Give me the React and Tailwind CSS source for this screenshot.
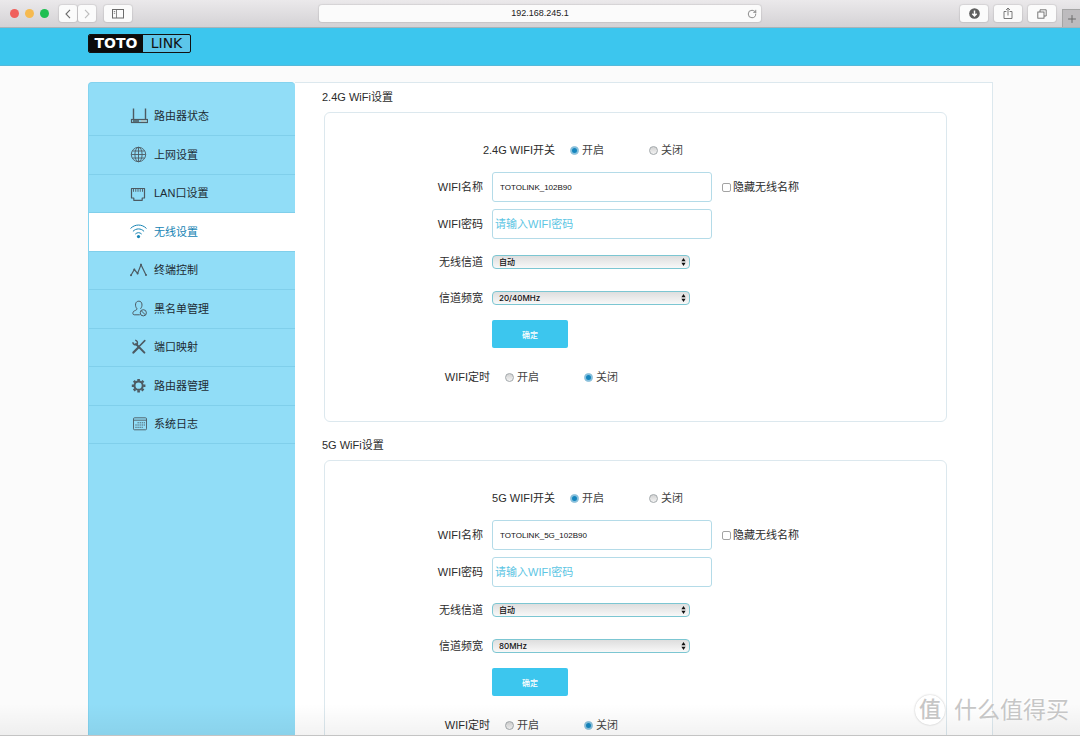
import React, { useState } from "react";
import { Plus, RotateCw } from "lucide-react";

const RouterIcon = () => (
  <>
    <path d="M3.5 0.5V11M15.5 0.5V11" strokeWidth="1.4" />
    <rect x="1.5" y="11.5" width="16" height="3" strokeWidth="1.2" />
    <path d="M3 13h6" strokeWidth="1.6" />
    <path d="M11 13h5" strokeWidth="1" stroke="#c3b5a6" />
  </>
);

const GlobeIcon = () => (
  <>
    <circle cx="8.5" cy="8.5" r="7.2" />
    <ellipse cx="8.5" cy="8.5" rx="3.6" ry="7.2" />
    <path d="M8.5 1.3v14.4M1.3 8.5h14.4M2.3 5h12.4M2.3 12h12.4" />
  </>
);

const LanIcon = () => (
  <>
    <path
      d="M1.5 3.5h13v9.5h-2.3v2.3H3.8V13H1.5z"
      strokeWidth="1.2"
      strokeLinejoin="round"
    />
    <path
      d="M3.5 4v2.8M5.75 4v2.8M8 4v2.8M10.25 4v2.8M12.5 4v2.8"
      strokeWidth="0.9"
    />
  </>
);

const WifiIcon = () => (
  <>
    <path
      d="M0.8 5.2C5 0.9 12 0.9 16.2 5.2M3.2 8.1c3-3 7.6-3 10.6 0M5.6 10.8c1.7-1.6 4.1-1.6 5.8 0"
      strokeWidth="1"
      strokeLinecap="round"
    />
    <circle cx="8.5" cy="13.6" r="1.6" fill="currentColor" stroke="none" />
  </>
);

const ActivityIcon = () => (
  <>
    <path d="M1 14.2L4.3 8.5 7.6 12.4 11 3.8 16 14" strokeWidth="1.2" />
    <g fill="currentColor" stroke="none">
      <circle cx="1" cy="14.2" r="1" />
      <circle cx="4.3" cy="8.5" r="1" />
      <circle cx="7.6" cy="12.4" r="1" />
      <circle cx="11" cy="3.8" r="1" />
      <circle cx="16" cy="14" r="1" />
    </g>
  </>
);

const BlacklistIcon = () => (
  <>
    <path
      d="M9.8 14.8H4.2C2.5 14.8 2.6 12.4 3.6 11.4 4.7 10.4 7 10.2 7 8.8 5.8 7.4 5.3 5.6 5.6 3.9 6 2 7.2 1.2 8.8 1.2s2.9 0.9 3.1 2.7c0.3 1.8-0.2 3.5-1.4 4.9"
      strokeWidth="1"
    />
    <circle cx="13.3" cy="12.8" r="3.1" strokeWidth="1" />
    <path d="M11.2 10.7l4.2 4.2" strokeWidth="1" />
  </>
);

const ToolsIcon = () => (
  <>
    <path d="M6 6l8.4 8.6" strokeWidth="2" strokeLinecap="round" />
    <path
      d="M2.9 4.2a2.6 2.6 0 0 0 4 2.2A2.6 2.6 0 0 0 5.2 2.2"
      strokeWidth="1.5"
    />
    <path d="M14.8 2.6l-5 5.2" strokeWidth="1.6" strokeLinecap="round" />
    <path d="M8.6 9.2l-5.2 5.4" strokeWidth="2.2" strokeLinecap="round" />
  </>
);

const GearIcon = () => (
  <>
    <circle cx="8.6" cy="8.7" r="4.1" strokeWidth="2" />
    <path
      d="M8.6 1.9v2.2M8.6 13.3v2.2M1.8 8.7H4M13.2 8.7h2.2M3.8 3.9l1.5 1.5M11.9 12l1.5 1.5M13.4 3.9l-1.5 1.5M5.3 12l-1.5 1.5"
      strokeWidth="2.6"
    />
  </>
);

const LogIcon = () => (
  <>
    <rect x="3.5" y="2.8" width="13" height="12" rx="1" />
    <path d="M3.5 5.2h13" />
    <path d="M7.5 7.8h7.5M5.3 10h9.7M5.3 12.3h7.5" strokeDasharray="1.4 0.7" />
  </>
);

const menuItems = [
  { label: "路由器状态", icon: RouterIcon },
  { label: "上网设置", icon: GlobeIcon },
  { label: "LAN口设置", icon: LanIcon },
  { label: "无线设置", icon: WifiIcon },
  { label: "终端控制", icon: ActivityIcon },
  { label: "黑名单管理", icon: BlacklistIcon },
  { label: "端口映射", icon: ToolsIcon },
  { label: "路由器管理", icon: GearIcon },
  { label: "系统日志", icon: LogIcon },
];

const bands = [
  {
    id: "wifi24",
    title: "2.4G WiFi设置",
    switchLabel: "2.4G WIFI开关",
    ssid: "TOTOLINK_102B90",
    bandwidths: ["20/40MHz", "20MHz", "40MHz"],
  },
  {
    id: "wifi5",
    title: "5G WiFi设置",
    switchLabel: "5G WIFI开关",
    ssid: "TOTOLINK_5G_102B90",
    bandwidths: ["80MHz", "40MHz", "20MHz"],
  },
];

const ToolbarButton = ({ label, className = "w-7", children }) => (
  <button
    type="button"
    aria-label={label}
    className={`flex h-[17px] items-center justify-center rounded-[3px] bg-[#fbfbfb] text-[#6b6b6b] shadow-[0_0_1px_1px_rgba(0,0,0,0.08)] ${className}`}
  >
    {children}
  </button>
);

const BrowserBar = () => (
  <div className="grid h-7 shrink-0 grid-cols-[1fr_41%_1fr] items-center border-b border-[#a9b3b8] bg-linear-to-b from-[#ebe9eb] to-[#d4d2d5]">
    <div className="flex items-center pl-[10px]">
      <div className="flex gap-[6px]">
        <span className="size-[9px] rounded-full bg-[#f0605c]" />
        <span className="size-[9px] rounded-full bg-[#f6ba50]" />
        <span className="size-[9px] rounded-full bg-[#1fbf52]" />
      </div>
      <div className="ml-[10px] flex gap-px">
        <ToolbarButton label="后退" className="w-[18px]">
          <svg viewBox="0 0 6 10" className="h-[10px] w-[6px]" fill="none" stroke="currentColor" strokeWidth="1.1">
            <path d="M5 0.8L1 5l4 4.2" />
          </svg>
        </ToolbarButton>
        <ToolbarButton label="前进" className="w-[18px]">
          <svg viewBox="0 0 6 10" className="h-[10px] w-[6px]" fill="none" stroke="#bdbdbd" strokeWidth="1.1">
            <path d="M1 0.8L5 5 1 9.2" />
          </svg>
        </ToolbarButton>
      </div>
      <div className="ml-2 flex">
        <ToolbarButton label="边栏">
          <svg viewBox="0 0 12 10" className="h-[10px] w-3" fill="none" stroke="currentColor">
            <rect x="0.5" y="0.5" width="11" height="8.5" />
            <path d="M4.5 0.5v8.5M1.8 2.5h1.4M1.8 4.3h1.4" strokeWidth="0.8" />
          </svg>
        </ToolbarButton>
      </div>
    </div>

    <div className="flex h-[17px] items-center rounded-[3px] bg-[#fbfbfb] px-1 shadow-[0_0_1px_1px_rgba(0,0,0,0.08)]">
      <input
        aria-label="地址"
        defaultValue="192.168.245.1"
        className="min-w-0 flex-1 bg-transparent pl-[10px] text-center text-[9px] text-[#222] outline-none"
      />
      <button type="button" aria-label="重新载入" className="text-[#777]">
        <RotateCw className="size-[10px]" strokeWidth={2} />
      </button>
    </div>

    <div className="flex h-full items-center justify-end gap-[6px]">
      <ToolbarButton label="下载">
        <svg viewBox="0 0 12 12" className="size-[11px]">
          <circle cx="6" cy="6" r="5.8" fill="#5f5f5f" />
          <path
            d="M6 2.6v5.6M3.6 6.2L6 8.6l2.4-2.4"
            fill="none"
            stroke="#fff"
            strokeWidth="1.6"
          />
        </svg>
      </ToolbarButton>
      <ToolbarButton label="共享">
        <svg viewBox="0 0 10 13" className="h-[13px] w-[10px]" fill="none" stroke="currentColor" strokeWidth="0.9">
          <path d="M3.4 4.5H1v7h8v-7H6.6M5 8.5V1.2M3 3L5 1l2 2" />
        </svg>
      </ToolbarButton>
      <ToolbarButton label="标签页">
        <svg viewBox="0 0 10 10" className="size-[10px]" fill="none" stroke="currentColor" strokeWidth="0.9">
          <rect x="0.8" y="3" width="6.2" height="6.2" />
          <path d="M3 3V0.8h6.2V7H7" />
        </svg>
      </ToolbarButton>
      <button
        type="button"
        aria-label="新标签页"
        className="flex h-[18px] w-[18px] items-center justify-center self-end border-t border-l border-[#a5a5a5] bg-[#bdbbbe] text-[#6b6b6b]"
      >
        <Plus className="size-3" strokeWidth={2} />
      </button>
    </div>
  </div>
);

const Header = () => (
  <header className="h-[38px] shrink-0 border-b border-[#54b9da] bg-[#3cc6ee] px-[88px] pt-[6px]">
    <a
      href="#home"
      className="flex h-[19px] w-[103px] overflow-hidden rounded-[2px] border border-[#111] bg-[#5cc6ea] font-['DejaVu_Sans',sans-serif] text-[14px] leading-[17px]"
    >
      <span className="flex-1 bg-[#0b0b0b] text-center font-bold text-white">
        TOTO
      </span>
      <span className="w-[47px] text-center text-[#111]">LINK</span>
    </a>
  </header>
);

const Sidebar = ({ active, onSelect }) => (
  <aside className="w-[207px] shrink-0 rounded-t-[4px] border-t border-l border-[#84d3ef] bg-[#91ddf7] pt-[15px]">
    <nav className="grid h-[346px] grid-rows-9">
      {menuItems.map((item) => (
        <a
          key={item.label}
          href="#menu"
          onClick={(e) => {
            e.preventDefault();
            onSelect(item.label);
          }}
          className={`flex items-center gap-[6px] border-b border-[#80cfeb] pl-[41px] ${
            active === item.label
              ? "bg-white text-[#1684b4]"
              : "text-[#1d2b33]"
          }`}
        >
          <svg
            viewBox="0 0 18 18"
            className={`size-[18px] ${
              active === item.label ? "text-[#1684b4]" : "text-[#4c5a62]"
            }`}
            fill="none"
            stroke="currentColor"
            strokeWidth="0.9"
          >
            <item.icon />
          </svg>
          <span>{item.label}</span>
        </a>
      ))}
    </nav>
  </aside>
);

const Radio = ({ name, label, defaultChecked }) => (
  <label className="flex items-center gap-[3px] text-[#444]">
    <input
      type="radio"
      name={name}
      defaultChecked={defaultChecked}
      className="size-[9px] appearance-none rounded-full border border-[#a3a9ac] bg-linear-to-b from-[#d2d2d2] to-[#f4f4f4] checked:border-[#a9cfe2] checked:bg-[#1585bd] checked:bg-none checked:shadow-[inset_0_0_0_1px_#8cc4e0]"
    />
    {label}
  </label>
);

const SelectRow = ({ id, label, options }) => (
  <div className="flex items-center gap-[9px]">
    <label htmlFor={id} className="w-[158px] text-right leading-[14px]">
      {label}
    </label>
    <div className="relative flex w-[198px]">
      <select
        id={id}
        className="h-[14px] w-full appearance-none rounded-[4px] border border-[#7cc6d2] bg-linear-to-b from-[#dedede] to-[#f8f8f8] px-[6px] font-[Inter,'Noto_Sans_CJK_SC',sans-serif] text-[8px] leading-3 font-medium text-[#111]"
      >
        {options.map((option) => (
          <option key={option}>{option}</option>
        ))}
      </select>
      <svg
        viewBox="0 0 5 8"
        className="pointer-events-none absolute top-[3px] right-[4px] h-2 w-[5px]"
      >
        <path d="M2.5 0L4.6 3.2H0.4zM2.5 8L0.4 4.8h4.2z" fill="#111" />
      </svg>
    </div>
  </div>
);

const WifiSection = ({ band }) => (
  <section className="mb-[15px]">
    <h2 className="mb-[7px] leading-4">{band.title}</h2>
    <form
      onSubmit={(e) => e.preventDefault()}
      className="ml-[2px] rounded-[6px] border border-[#dce8ee] pt-[29px] pb-9"
    >
      <div className="flex h-4 items-center gap-[15px]">
        <span className="w-[230px] text-right">{band.switchLabel}</span>
        <div className="flex gap-[45px]">
          <Radio name={`${band.id}-switch`} label="开启" defaultChecked />
          <Radio name={`${band.id}-switch`} label="关闭" />
        </div>
      </div>

      <div className="mt-[14px] flex items-center gap-[9px]">
        <label htmlFor={`${band.id}-ssid`} className="w-[158px] text-right">
          WIFI名称
        </label>
        <input
          id={`${band.id}-ssid`}
          type="text"
          defaultValue={band.ssid}
          className="h-[30px] w-[220px] rounded-[3px] border border-[#b4dbe8] px-[7px] text-[8px] text-[#111] outline-none"
        />
        <label className="flex items-center gap-[2px] pl-px">
          <input
            type="checkbox"
            className="size-[9px] appearance-none rounded-[2px] border border-[#a3a3a3] bg-white checked:bg-[#1585bd]"
          />
          隐藏无线名称
        </label>
      </div>

      <div className="mt-[7px] flex items-center gap-[9px]">
        <label htmlFor={`${band.id}-password`} className="w-[158px] text-right">
          WIFI密码
        </label>
        <input
          id={`${band.id}-password`}
          type="text"
          placeholder="请输入WIFI密码"
          className="h-[30px] w-[220px] rounded-[3px] border border-[#b4dbe8] px-[2px] outline-none placeholder:text-[#5cc5e3]"
        />
      </div>

      <div className="mt-4">
        <SelectRow id={`${band.id}-channel`} label="无线信道" options={["自动", "1", "6", "11"]} />
      </div>
      <div className="mt-[22px]">
        <SelectRow id={`${band.id}-bandwidth`} label="信道频宽" options={band.bandwidths} />
      </div>

      <button
        type="submit"
        className="mt-[15px] ml-[167px] block h-7 w-[76px] rounded-[2px] bg-[#3cc6ee] pt-[3px] text-[8px] font-medium text-white"
      >
        确定
      </button>

      <div className="mt-[21px] flex h-4 items-center gap-[15px]">
        <span className="w-[165px] text-right">WIFI定时</span>
        <div className="flex gap-[45px]">
          <Radio name={`${band.id}-timer`} label="开启" />
          <Radio name={`${band.id}-timer`} label="关闭" defaultChecked />
        </div>
      </div>
    </form>
  </section>
);

const Watermark = () => (
  <div className="pointer-events-none absolute right-[11px] bottom-[10px] flex items-center gap-[9px] text-[#c6c6c6]">
    <span className="flex size-[30px] items-center justify-center rounded-full bg-white text-[22px] leading-none font-medium shadow-[0_0_2px_rgba(0,0,0,0.25)]">
      值
    </span>
    <span className="text-[23px] leading-8 [text-shadow:-1px_-1px_0_#fff]">
      什么值得买
    </span>
  </div>
);

const App = () => {
  const [active, setActive] = useState("无线设置");

  return (
    <div className="relative flex h-screen flex-col overflow-hidden bg-[#fbfbfb] font-['Liberation_Sans','Noto_Sans_CJK_SC',sans-serif] text-[11px] text-[#2b2b2b]">
      <BrowserBar />
      <Header />

      <div className="flex-1 overflow-y-auto pt-4 pr-[87px] pl-[88px] [scrollbar-width:none]">
        <div className="flex">
          <Sidebar active={active} onSelect={setActive} />
          <main className="flex-1 border-t border-r border-[#dce8ee] bg-white pt-[6px] pr-[45px] pb-4 pl-[27px]">
            {bands.map((band) => (
              <WifiSection key={band.id} band={band} />
            ))}
          </main>
        </div>
      </div>

      <div className="pointer-events-none absolute inset-x-0 bottom-0 h-8 border-b border-[#c4c4c4] bg-linear-to-b from-transparent to-black/5" />
      <Watermark />
    </div>
  );
};

export default App;
